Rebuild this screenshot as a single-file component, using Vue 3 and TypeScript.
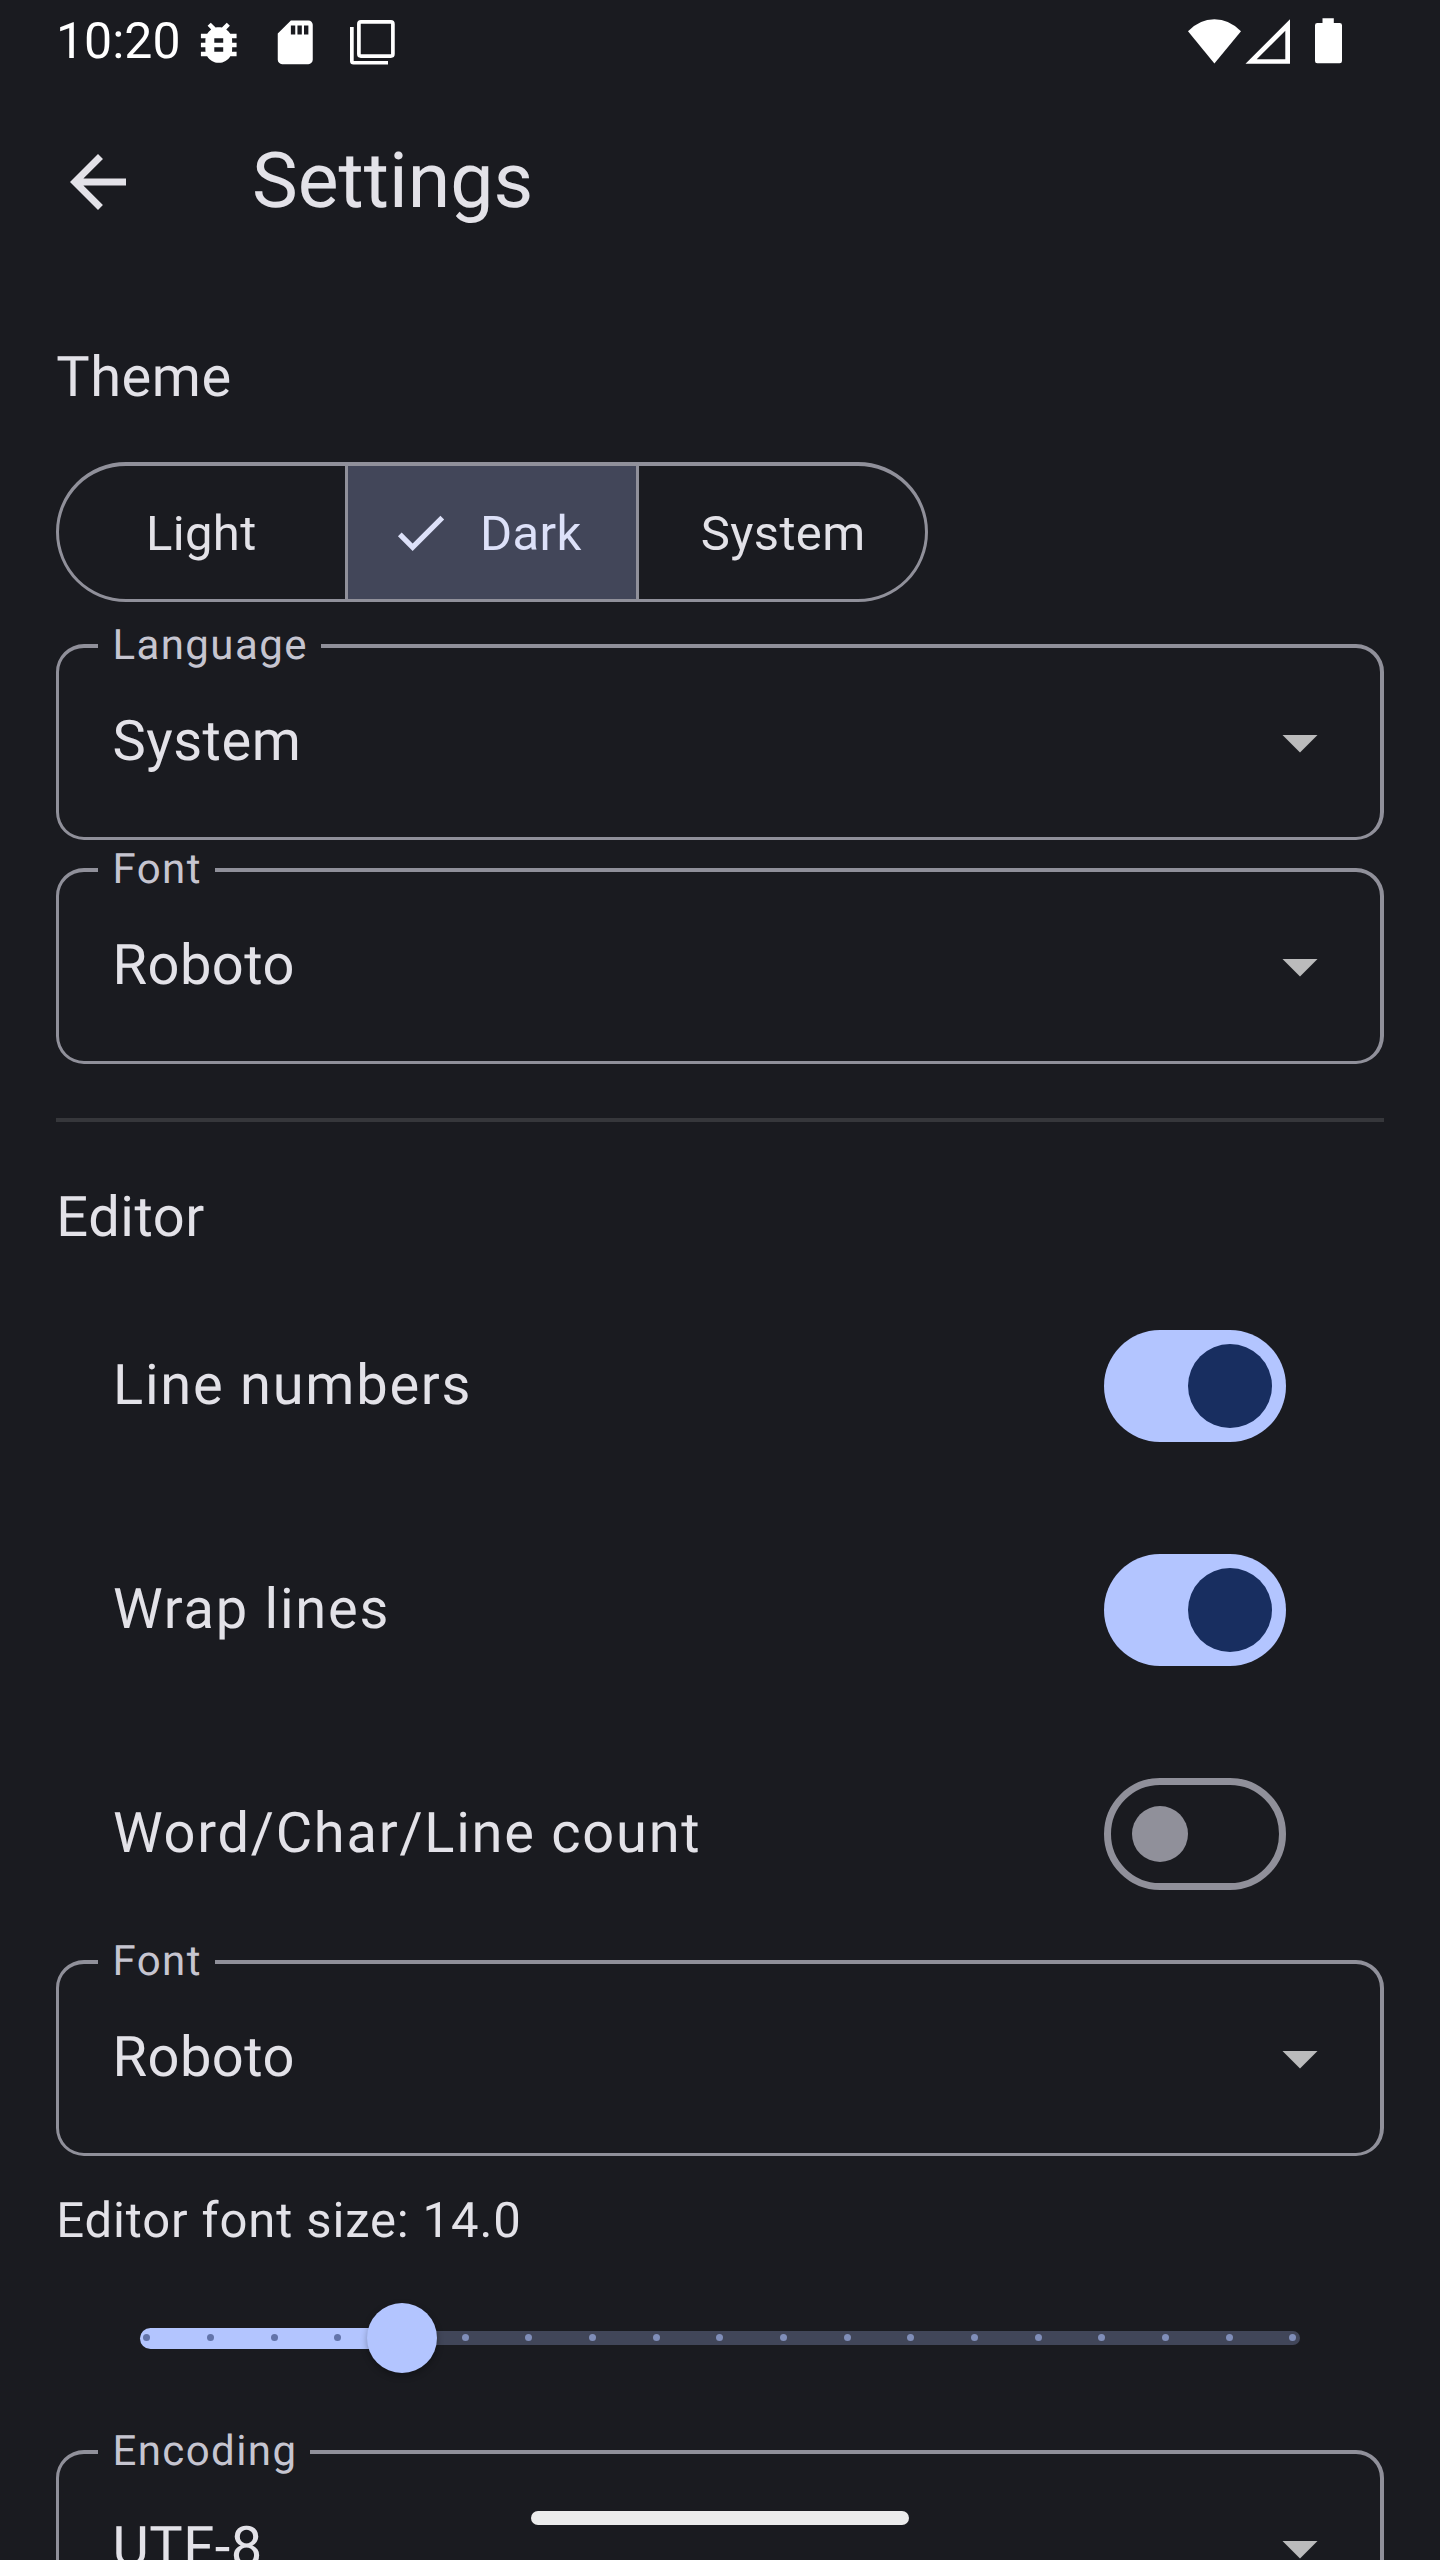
<script setup lang="ts">
import { computed, ref } from 'vue'

interface Toggle {
  label: string
  on: boolean
}

interface Field {
  label: string
  value: string
}

const themes = ['Light', 'Dark', 'System']
const theme = ref('Dark')

const appearance: Field[] = [
  { label: 'Language', value: 'System' },
  { label: 'Font', value: 'Roboto' },
]

const toggles = ref<Toggle[]>([
  { label: 'Line numbers', on: true },
  { label: 'Wrap lines', on: true },
  { label: 'Word/Char/Line count', on: false },
])

const editorFields: Field[] = [
  { label: 'Font', value: 'Roboto' },
  { label: 'Encoding', value: 'UTF-8' },
]

const minSize = 10
const maxSize = 28
const fontSize = ref(14)
const steps = Array.from({ length: maxSize - minSize + 1 }, (_, i) => minSize + i)

// Stops sit 7px inside each end of the 1160px track.
const thumbX = computed(() => 7 + ((fontSize.value - minSize) / (maxSize - minSize)) * 1146)
</script>

<template>
  <div class="screen">
    <header class="status">
      <span class="time">10:20</span>
      <svg class="bug" viewBox="0 0 24 24"><path d="M20 8h-2.81c-.45-.78-1.07-1.45-1.82-1.96L17 4.41 15.59 3l-2.17 2.17C12.96 5.06 12.49 5 12 5c-.49 0-.96.06-1.41.17L8.41 3 7 4.41l1.62 1.63C7.88 6.55 7.26 7.22 6.81 8H4v2h2.09c-.05.33-.09.66-.09 1v1H4v2h2v1c0 .34.04.67.09 1H4v2h2.81c1.04 1.79 2.97 3 5.19 3s4.15-1.21 5.19-3H20v-2h-2.09c.05-.33.09-.66.09-1v-1h2v-2h-2v-1c0-.34-.04-.67-.09-1H20V8zm-6 8h-4v-2h4v2zm0-4h-4v-2h4v2z" /></svg>
      <svg class="sd" viewBox="0 0 24 24"><path d="M18 2h-8L4 8v12c0 1.1.9 2 2 2h12c1.1 0 2-.9 2-2V4c0-1.1-.9-2-2-2zm-6 6.4h-2V4.3h2v4.1zm3 0h-2V4.3h2v4.1zm3 0h-2V4.3h2v4.1z" /></svg>
      <svg class="stack" viewBox="0 0 45 45">
        <rect x="8.9" y="1.9" width="34" height="34.2" rx="2" fill="none" stroke="#fff" stroke-width="3.7" />
        <path d="M0 7h3.7v33.9H38v3.7H3.5A3.5 3.5 0 0 1 0 41.1z" />
      </svg>
      <div class="indicators">
        <svg width="102" height="47" viewBox="1188 18 102 47">
          <path d="M1188 31.3Q1199.5 19.3 1214.4 19.3T1241 31.3L1214.4 63.5z" />
          <path fill-rule="evenodd" d="M1245.5 63.7H1290V19.2zM1256.7 59.3H1285.3V30.7z" />
        </svg>
        <svg width="27" height="47" viewBox="1315 18 27 47">
          <path d="M1322.5 18.3h11.3V23h5.9a2.3 2.3 0 0 1 2.3 2.3V61a2.3 2.3 0 0 1-2.3 2.3h-22.4A2.3 2.3 0 0 1 1315 61V25.3a2.3 2.3 0 0 1 2.3-2.3h5.2z" />
        </svg>
      </div>
    </header>

    <nav class="appbar">
      <svg class="back" viewBox="0 0 24 24"><path d="M20 11H7.83l5.59-5.59L12 4l-8 8 8 8 1.41-1.41L7.83 13H20v-2z" /></svg>
      <h1>Settings</h1>
    </nav>

    <main class="body">
      <h2 class="theme-title">Theme</h2>
      <div class="segments">
        <button
          v-for="name in themes"
          :key="name"
          class="segment"
          :class="[name.toLowerCase(), { selected: theme === name }]"
          @click="theme = name"
        >
          <svg v-if="theme === name" class="check" viewBox="0 0 24 24"><path d="M9 16.17L4.83 12l-1.42 1.41L9 19 21 7l-1.41-1.41z" /></svg>
          <span>{{ name }}</span>
        </button>
      </div>

      <div v-for="field in appearance" :key="field.label" class="field">
        <span class="label">{{ field.label }}</span>
        <span class="value">{{ field.value }}</span>
        <svg class="caret" viewBox="0 0 24 24"><path d="M7 10l5 5 5-5z" /></svg>
      </div>

      <div class="divider"></div>

      <h2 class="editor-title">Editor</h2>
      <div class="rows">
        <div v-for="row in toggles" :key="row.label" class="row">
          <span class="row-label">{{ row.label }}</span>
          <span class="switch" :class="{ on: row.on }" @click="row.on = !row.on"><i class="thumb"></i></span>
        </div>
      </div>

      <div class="field editor-font">
        <span class="label">{{ editorFields[0].label }}</span>
        <span class="value">{{ editorFields[0].value }}</span>
        <svg class="caret" viewBox="0 0 24 24"><path d="M7 10l5 5 5-5z" /></svg>
      </div>

      <p class="size">Editor font size: {{ fontSize.toFixed(1) }}</p>
      <div class="slider">
        <div class="track"></div>
        <div class="fill" :style="{ width: thumbX + 'px' }"></div>
        <div class="stops">
          <i v-for="step in steps" :key="step" class="stop" :class="{ passed: step < fontSize }"></i>
        </div>
        <div class="knob" :style="{ left: thumbX + 'px' }"></div>
      </div>

      <div class="field encoding">
        <span class="label">{{ editorFields[1].label }}</span>
        <span class="value">{{ editorFields[1].value }}</span>
        <svg class="caret" viewBox="0 0 24 24"><path d="M7 10l5 5 5-5z" /></svg>
      </div>
    </main>

    <div class="home"></div>
  </div>
</template>

<style>
body {
  margin: 0;
  background: #1a1b20;
}
</style>

<style scoped>
.screen {
  position: relative;
  width: 1440px;
  height: 2560px;
  overflow: hidden;
  background: #1a1b20;
  color: #e3e2e8;
  font-family: Roboto, "Liberation Sans", sans-serif;
  text-rendering: geometricPrecision;
}

h1,
h2,
p {
  margin: 0;
  font-weight: 400;
}

svg {
  display: block;
  flex: none;
  fill: currentColor;
}

.status {
  display: flex;
  align-items: flex-start;
  height: 84px;
  padding: 0 98px 0 56px;
  box-sizing: border-box;
  color: #fff;
}

.time {
  width: 136px;
  font-size: 50px;
  line-height: 85px;
}

.bug {
  width: 53.5px;
  height: 53.5px;
  margin: 15.5px 0 0 -0.5px;
}

.sd {
  width: 52.5px;
  height: 52.5px;
  margin: 15.5px 0 0 24.2px;
}

.stack {
  width: 45px;
  height: 45px;
  margin: 20px 0 0 28.3px;
}

.indicators {
  display: flex;
  gap: 25px;
  margin: 18px 0 0 auto;
}

.appbar {
  display: flex;
  align-items: center;
  height: 196px;
  padding: 0 56px;
}

.back {
  width: 84px;
  height: 84px;
}

h1 {
  margin: -2px 0 0 112px;
  font-size: 77px;
  line-height: 98px;
}

.body {
  display: flex;
  flex-direction: column;
  padding: 0 56px;
}

h2 {
  padding-left: 0.3px;
  font-size: 56px;
  line-height: 84px;
  letter-spacing: 0.525px;
}

.theme-title {
  margin-top: 55px;
}

.segments {
  display: flex;
  box-sizing: border-box;
  width: 872px;
  height: 140px;
  margin: 43px 0 14px;
  border: 3px solid #90909a;
  border-top-width: 4px;
  border-radius: 70px;
  overflow: hidden;
}

.segment {
  display: flex;
  align-items: center;
  box-sizing: border-box;
  margin: 0;
  padding: 2px 0 0;
  border: 0;
  background: none;
  color: inherit;
  font: 400 49px/70px Roboto, "Liberation Sans", sans-serif;
  letter-spacing: 0.35px;
}

.light {
  width: 286px;
  padding-left: 87px;
}

.dark {
  width: 294px;
  padding-left: 41px;
  border: solid #90909a;
  border-width: 0 3px;
}

.system {
  flex: 1;
  padding-left: 61.8px;
}

.selected {
  background: #424659;
  color: #dde1f9;
}

.check {
  width: 63px;
  height: 63px;
  margin: -2px 28px 0 0;
}

.field {
  position: relative;
  display: flex;
  align-items: center;
  justify-content: space-between;
  box-sizing: border-box;
  height: 196px;
  margin-top: 28px;
  padding: 0 38px 0 53.4px;
  border: solid #90909a;
  border-width: 4px 4px 3px 3px;
  border-radius: 28px;
}

.label {
  position: absolute;
  top: -27px;
  left: 39px;
  padding: 0 13px 0 14.5px;
  background: #1a1b20;
  color: #c6c5d0;
  font-size: 42px;
  line-height: 49px;
  letter-spacing: 1.4px;
}

.value {
  margin-top: -3px;
  font-size: 56px;
  line-height: 84px;
  letter-spacing: 0.525px;
}

.caret {
  width: 84px;
  height: 84px;
  margin-top: -1px;
  color: #bbbbbc;
}

.divider {
  height: 4px;
  margin-top: 54px;
  background: #36373b;
}

.editor-title {
  margin-top: 53px;
}

.rows {
  margin-top: 15px;
}

.row {
  display: flex;
  align-items: center;
  justify-content: space-between;
  height: 224px;
  padding: 0 98px 0 57px;
}

.row-label {
  margin-top: -2px;
  font-size: 56px;
  line-height: 84px;
  letter-spacing: 1.75px;
}

.switch {
  display: flex;
  align-items: center;
  box-sizing: border-box;
  width: 182px;
  height: 112px;
  padding: 0 21px;
  border: 7px solid #90909a;
  border-radius: 56px;
}

.thumb {
  width: 56px;
  height: 56px;
  border-radius: 50%;
  background: #90909a;
}

.switch.on {
  justify-content: flex-end;
  padding: 0 14px;
  border: 0;
  background: #b3c5ff;
}

.on .thumb {
  width: 84px;
  height: 84px;
  background: #182e60;
}

.editor-font {
  margin-top: 14px;
}

.size {
  margin-top: 23px;
  padding-left: 0.3px;
  font-size: 49px;
  line-height: 83px;
  letter-spacing: 0.875px;
}

.slider {
  position: relative;
  height: 96px;
  margin: 28px 84px 0;
}

.track,
.fill,
.stops,
.knob {
  position: absolute;
}

.track {
  top: 41px;
  left: 0;
  right: 0;
  height: 14px;
  border-radius: 7px;
  background: #414659;
}

.fill {
  top: 38px;
  left: 0;
  height: 21px;
  border-radius: 10.5px 0 0 10.5px;
  background: #b3c5ff;
}

.stops {
  top: 44.3px;
  left: 3.4px;
  right: 3.4px;
  display: flex;
  justify-content: space-between;
}

.stop {
  width: 7px;
  height: 7px;
  border-radius: 50%;
  background: #808eb9;
}

.stop.passed {
  background: #6374aa;
}

.knob {
  top: 13px;
  width: 70px;
  height: 70px;
  margin-left: -35px;
  border-radius: 50%;
  background: #b3c5ff;
  box-shadow: 0 3px 7px rgba(0, 0, 0, 0.3);
}

.encoding {
  margin-top: 64px;
}

.home {
  position: absolute;
  top: 2511px;
  left: 531px;
  width: 378px;
  height: 14px;
  border-radius: 7px;
  background: #ececec;
}
</style>
